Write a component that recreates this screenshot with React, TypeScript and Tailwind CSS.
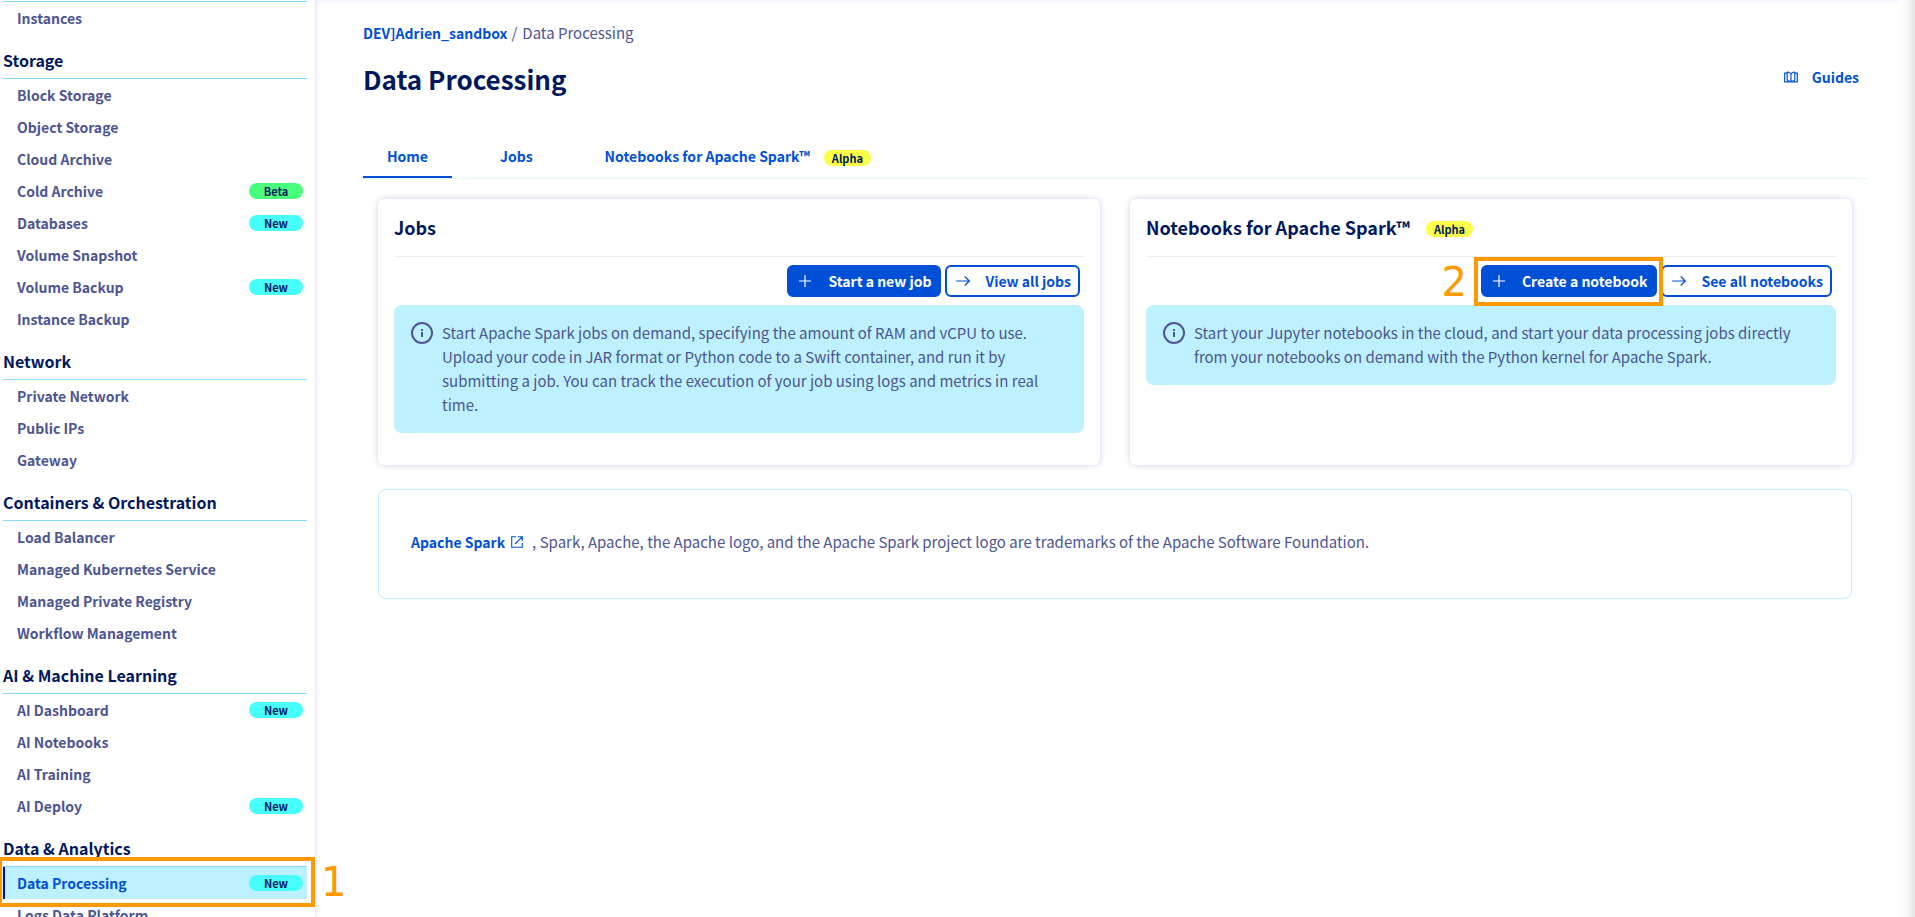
import type { ReactNode } from 'react';

type Tone = 'beta' | 'new' | 'alpha';

type NavItem = { label: string; badge?: Tone; active?: boolean };

type NavGroup = { title?: string; items: NavItem[] };

const groups: NavGroup[] = [
  { items: [{ label: 'Instances' }] },
  {
    title: 'Storage',
    items: [
      { label: 'Block Storage' },
      { label: 'Object Storage' },
      { label: 'Cloud Archive' },
      { label: 'Cold Archive', badge: 'beta' },
      { label: 'Databases', badge: 'new' },
      { label: 'Volume Snapshot' },
      { label: 'Volume Backup', badge: 'new' },
      { label: 'Instance Backup' },
    ],
  },
  {
    title: 'Network',
    items: [{ label: 'Private Network' }, { label: 'Public IPs' }, { label: 'Gateway' }],
  },
  {
    title: 'Containers & Orchestration',
    items: [
      { label: 'Load Balancer' },
      { label: 'Managed Kubernetes Service' },
      { label: 'Managed Private Registry' },
      { label: 'Workflow Management' },
    ],
  },
  {
    title: 'AI & Machine Learning',
    items: [
      { label: 'AI Dashboard', badge: 'new' },
      { label: 'AI Notebooks' },
      { label: 'AI Training' },
      { label: 'AI Deploy', badge: 'new' },
    ],
  },
  {
    title: 'Data & Analytics',
    items: [{ label: 'Data Processing', badge: 'new', active: true }, { label: 'Logs Data Platform' }],
  },
];

const badgeText: Record<Tone, string> = { beta: 'Beta', new: 'New', alpha: 'Alpha' };

const badgeStyle: Record<Tone, string> = {
  beta: 'w-[54px] bg-[#47ff7b]',
  new: 'w-[54px] bg-[#47fffb]',
  alpha: 'mt-1 px-2 bg-[#fcff47]',
};

function Badge({ tone }: { tone: Tone }) {
  return (
    <span
      className={`inline-flex h-4 shrink-0 items-center justify-center rounded-full text-[11px] leading-4 font-bold text-[#00185e] ${badgeStyle[tone]}`}
    >
      {badgeText[tone]}
    </span>
  );
}

function StepNumber({ children, className }: { children: ReactNode; className: string }) {
  return (
    <span
      className={`absolute font-['DejaVu_Sans',sans-serif] text-[40px] leading-10 font-normal text-[#ff9900] ${className}`}
    >
      {children}
    </span>
  );
}

function Sidebar() {
  return (
    <nav
      aria-label="Public Cloud"
      className="relative z-10 w-[315px] shrink-0 bg-white pr-2 pl-[3px] shadow-[0_0_6px_rgba(0,0,200,0.16)]"
    >
      {groups.map((group, index) => (
        <section key={index}>
          {group.title ? (
            <h2 className="flex h-[45px] items-end border-b border-[#85d9fd] pb-[6px] text-[16px] leading-6 font-bold text-[#00185e]">
              {group.title}
            </h2>
          ) : (
            <div className="h-[2px] border-b border-[#85d9fd]" />
          )}
          <ul>
            {group.items.map((item) => (
              <li key={item.label} className="relative">
                <a
                  href="#"
                  className={
                    item.active
                      ? 'flex h-8 items-center justify-between border-l-2 border-[#000e9c] bg-[#bef1ff] pr-1 pl-3 text-[14px] font-bold text-[#0050d7]'
                      : 'flex h-8 items-center justify-between pr-1 pl-[14px] text-[14px] font-bold text-[#4d5592]'
                  }
                >
                  {item.label}
                  {item.badge && <Badge tone={item.badge} />}
                </a>
                {item.active && (
                  <>
                    <span className="pointer-events-none absolute -top-[10px] -right-2 -bottom-2 -left-[5px] z-10 border-4 border-[#ff9900]" />
                    <StepNumber className="-top-[5px] left-full ml-[14px]">1</StepNumber>
                  </>
                )}
              </li>
            ))}
          </ul>
        </section>
      ))}
    </nav>
  );
}

function GuidesIcon() {
  return (
    <svg width="14" height="12" viewBox="0 0 14 12" fill="none" stroke="currentColor" strokeWidth="1.2" aria-hidden="true">
      <path d="M3 2.200H.7v8.600h12.600V2.200H11" />
      <path d="M3.200 .8v7.600c0 1 .8 1.600 1.800 1.600h4c1 0 1.800-.6 1.800-1.600V.8" />
      <path d="M3.200 1c1.800 0 3 .6 3.800 2 .8-1.400 2-2 3.800-2M7 3v7" />
    </svg>
  );
}

function PlusIcon() {
  return (
    <svg width="12" height="12" viewBox="0 0 12 12" fill="none" stroke="currentColor" strokeWidth="1.2" aria-hidden="true">
      <path d="M6 0v12M0 6h12" />
    </svg>
  );
}

function ArrowIcon() {
  return (
    <svg width="14" height="14" viewBox="0 0 14 14" fill="none" stroke="currentColor" strokeWidth="1.2" strokeLinecap="round" aria-hidden="true">
      <path d="M.6 7h12.600M9 2.800 13.300 7 9 11.200" />
    </svg>
  );
}

function InfoIcon() {
  return (
    <svg width="22" height="22" viewBox="0 0 22 22" fill="none" className="shrink-0" aria-hidden="true">
      <circle cx="11" cy="11" r="10" stroke="currentColor" strokeWidth="2" />
      <path d="M10 7h2v2h-2zM10 10h2v5h-2z" fill="currentColor" />
    </svg>
  );
}

function ExternalIcon() {
  return (
    <svg width="12" height="12" viewBox="0 0 12 12" fill="none" stroke="currentColor" strokeWidth="1.1" aria-hidden="true">
      <path d="M5 .7H.7v10.600h10.600V7M7 .7h4.300V5M11.200.8 4 8" />
    </svg>
  );
}

function Button({ icon, primary, children }: { icon: ReactNode; primary?: boolean; children: ReactNode }) {
  return (
    <button
      type="button"
      className={`flex h-8 items-center gap-[14px] rounded-md border-2 border-[#0050d7] px-[7px] text-[14px] font-bold whitespace-nowrap ${
        primary ? 'bg-[#0050d7] text-white' : 'bg-white text-[#0050d7]'
      }`}
    >
      <span className="flex w-[18px] justify-center">{icon}</span>
      {children}
    </button>
  );
}

function Card({ title, actions, children }: { title: ReactNode; actions: ReactNode; children: ReactNode }) {
  return (
    <section className="flex min-h-[266px] flex-col rounded-md bg-white px-4 pb-8 shadow-[0_0_6px_rgba(0,0,150,0.2)]">
      <h2 className="flex h-[58px] items-center gap-4 border-b border-[#eeeeee] pb-px text-[18px] leading-6 font-bold text-[#00185e]">
        {title}
      </h2>
      <div className="flex justify-end gap-1 py-2 pr-1">{actions}</div>
      <div className="flex gap-[9px] rounded-lg bg-[#bef1ff] p-4 pl-[17px] text-[#4d5592]">
        <span className="pt-px">
          <InfoIcon />
        </span>
        <p className="flex-1 pr-4">{children}</p>
      </div>
    </section>
  );
}

export default function App() {
  return (
    <div className="flex h-screen overflow-hidden bg-white font-['Noto_Sans_CJK_SC',sans-serif] text-[15px] leading-6 text-[#4d5592]">
      <Sidebar />
      <main className="relative min-w-0 flex-1 px-12">
        <div className="pointer-events-none absolute inset-x-0 top-0 h-1 bg-linear-to-b from-[#f4f4fd] to-white" />
        <div className="pointer-events-none absolute top-0 right-0 bottom-0 w-4 bg-linear-to-r from-white via-[#fafafa] to-[#e2e3e5]" />
        <nav aria-label="Breadcrumb" className="flex pt-[21px]">
          <a href="#" className="text-[14px] font-bold text-[#0050d7]">
            DEV]Adrien_sandbox
          </a>
          <span className="px-1">/</span>
          <span className="pl-px">Data Processing</span>
        </nav>

        <header className="flex items-start justify-between pt-4">
          <h1 className="text-[26px] leading-9 font-bold text-[#00185e]">Data Processing</h1>
          <a href="#" className="mt-1 mr-2 flex items-center gap-[14px] text-[14px] font-bold text-[#0050d7]">
            <GuidesIcon />
            Guides
          </a>
        </header>

        <div
          role="tablist"
          className="mt-10 flex h-[42px] border-b border-[#dff6fd] text-[14px] font-bold text-[#0050d7]"
        >
          <button type="button" role="tab" aria-selected="true" className="border-b-2 border-[#0050d7] px-6 pb-[2px]">
            Home
          </button>
          <button type="button" role="tab" aria-selected="false" className="ml-6 border-b-2 border-transparent px-6 pb-[2px]">
            Jobs
          </button>
          <button
            type="button"
            role="tab"
            aria-selected="false"
            className="ml-6 flex items-center gap-[14px] border-b-2 border-transparent px-6 pb-[2px]"
          >
            Notebooks for Apache Spark™ <Badge tone="alpha" />
          </button>
        </div>

        <div className="grid grid-cols-2 gap-x-[30px] gap-y-6 px-[15px] pt-5">
          <Card
            title="Jobs"
            actions={
              <>
                <Button primary icon={<PlusIcon />}>
                  Start a new job
                </Button>
                <Button icon={<ArrowIcon />}>View all jobs</Button>
              </>
            }
          >
            Start Apache Spark jobs on demand, specifying the amount of RAM and vCPU to use. Upload your code in JAR
            format or Python code to a Swift container, and run it by submitting a job. You can track the execution of
            your job using logs and metrics in real time.
          </Card>
          <Card
            title={
              <>
                Notebooks for Apache Spark™ <Badge tone="alpha" />
              </>
            }
            actions={
              <>
                <div className="relative">
                  <Button primary icon={<PlusIcon />}>
                    Create a notebook
                  </Button>
                  <span className="pointer-events-none absolute -top-2 -right-[6px] -bottom-[9px] -left-[7px] z-10 border-4 border-[#ff9900]" />
                  <StepNumber className="-top-[3px] right-full mr-[14px]">2</StepNumber>
                </div>
                <Button icon={<ArrowIcon />}>See all notebooks</Button>
              </>
            }
          >
            Start your Jupyter notebooks in the cloud, and start your data processing jobs directly from your notebooks
            on demand with the Python kernel for Apache Spark.
          </Card>
          <section className="col-span-2 flex h-[110px] items-center rounded-lg border border-[#bef1ff] px-8 pb-1">
            <a href="#" className="flex items-center gap-[6px] text-[14px] font-bold text-[#0050d7]">
              Apache Spark
              <ExternalIcon />
            </a>
            <p className="pl-[9px]">
              , Spark, Apache, the Apache logo, and the Apache Spark project logo are trademarks of the Apache Software
              Foundation.
            </p>
          </section>
        </div>
      </main>
    </div>
  );
}
